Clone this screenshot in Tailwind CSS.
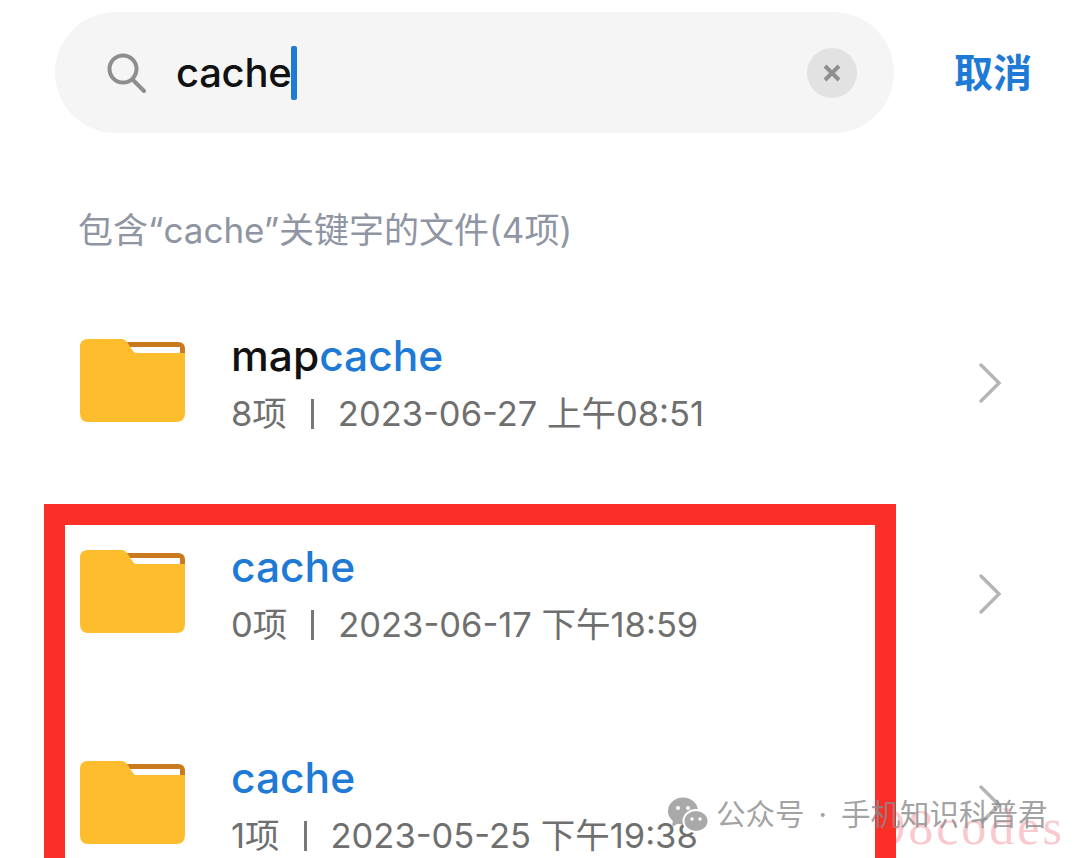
<!DOCTYPE html>
<html lang="zh-CN">
  <head>
    <meta charset="UTF-8" />
    <title>cache</title>
    <script src="https://cdn.jsdelivr.net/npm/@tailwindcss/browser@4"></script>
  </head>
  <body class="bg-white">
    <div class="relative w-[1080px] h-[858px] overflow-hidden bg-white font-['Inter','Noto_Sans_CJK_SC',sans-serif]">
      <!-- search bar -->
      <div class="flex items-center pt-[12px] pl-[55px]">
        <div class="flex items-center w-[839px] h-[121px] rounded-full bg-[#f5f5f6] pl-[52px] pr-[37px]">
          <svg class="w-[40px] h-[40px] shrink-0" viewBox="0 0 40 40" fill="none" stroke="#8e8e8e" stroke-width="4" stroke-linecap="round">
            <circle cx="16" cy="16" r="13.5" />
            <path d="M26 27 L37 38" />
          </svg>
          <div class="flex items-center ml-[29px] text-[40px] font-medium text-[#111] leading-none tracking-[-0.3px]">
            cache<span class="w-[6px] h-[54px] rounded-[2px] bg-[#1f7ad6]"></span>
          </div>
          <div class="ml-auto flex items-center justify-center w-[50px] h-[50px] rounded-full bg-[#e2e2e2]">
            <svg class="w-[20px] h-[20px]" viewBox="0 0 20 20" fill="none" stroke="#8f8f8f" stroke-width="4">
              <path d="M3 3 L17 17 M17 3 L3 17" />
            </svg>
          </div>
        </div>
        <span class="ml-[60px] text-[39px] font-semibold text-[#1f7ad6] leading-none">取消</span>
      </div>

      <p class="mt-[75px] ml-[78px] text-[35px] leading-[44px] text-[#8f95a3]">包含“cache”关键字的文件(4项)</p>

      <!-- rows -->
      <div class="mt-[61px] pl-[80px]">
        <div class="flex items-center h-[211px] -mt-[1px]">
          <svg class="w-[105px] h-[83px] shrink-0 mt-[-74px]" viewBox="0 0 105 83">
            <path d="M46 3 H98 Q105 3 105 10 V24 H46 Z" fill="#c97a1f" />
            <path d="M50 8 H100 V15 H50 Z" fill="#fff" />
            <path d="M8 0 H42 Q45 0 47 3 L53 12 Q54 14 58 14 H105 V74 Q105 83 96 83 H8 Q0 83 0 74 V8 Q0 0 8 0 Z" fill="#fdbd2c" />
          </svg>
          <div class="ml-[46px] mt-[-67px]">
            <div class="text-[42.5px] leading-[46px] font-medium text-[#111]">map<span class="text-[#1f7ad6]">cache</span></div>
            <div class="flex items-center mt-[13px] text-[34.5px] leading-[44px] text-[#6f6f6f]">8项<span class="w-[3px] h-[30px] mx-[24px] bg-[#777]"></span>2023-06-27 上午08:51</div>
          </div>
          <svg class="ml-auto mr-[79px] w-[22px] h-[40px] mt-[-69px]" viewBox="0 0 22 40" fill="none" stroke="#b5b5b5" stroke-width="3.4" stroke-linecap="round">
            <path d="M2 2 L20 20 L2 38" />
          </svg>
        </div>
        <div class="flex items-center h-[211px]">
          <svg class="w-[105px] h-[83px] shrink-0 mt-[-74px]" viewBox="0 0 105 83">
            <path d="M46 3 H98 Q105 3 105 10 V24 H46 Z" fill="#c97a1f" />
            <path d="M50 8 H100 V15 H50 Z" fill="#fff" />
            <path d="M8 0 H42 Q45 0 47 3 L53 12 Q54 14 58 14 H105 V74 Q105 83 96 83 H8 Q0 83 0 74 V8 Q0 0 8 0 Z" fill="#fdbd2c" />
          </svg>
          <div class="ml-[46px] mt-[-67px]">
            <div class="text-[42.5px] leading-[46px] font-medium text-[#1f7ad6]">cache</div>
            <div class="flex items-center mt-[13px] text-[34.5px] leading-[44px] text-[#6f6f6f]">0项<span class="w-[3px] h-[30px] mx-[24px] bg-[#777]"></span>2023-06-17 下午18:59</div>
          </div>
          <svg class="ml-auto mr-[79px] w-[22px] h-[40px] mt-[-69px]" viewBox="0 0 22 40" fill="none" stroke="#b5b5b5" stroke-width="3.4" stroke-linecap="round">
            <path d="M2 2 L20 20 L2 38" />
          </svg>
        </div>
        <div class="flex items-center h-[211px]">
          <svg class="w-[105px] h-[83px] shrink-0 mt-[-74px]" viewBox="0 0 105 83">
            <path d="M46 3 H98 Q105 3 105 10 V24 H46 Z" fill="#c97a1f" />
            <path d="M50 8 H100 V15 H50 Z" fill="#fff" />
            <path d="M8 0 H42 Q45 0 47 3 L53 12 Q54 14 58 14 H105 V74 Q105 83 96 83 H8 Q0 83 0 74 V8 Q0 0 8 0 Z" fill="#fdbd2c" />
          </svg>
          <div class="ml-[46px] mt-[-67px]">
            <div class="text-[42.5px] leading-[46px] font-medium text-[#1f7ad6]">cache</div>
            <div class="flex items-center mt-[13px] text-[34.5px] leading-[44px] text-[#6f6f6f]">1项<span class="w-[3px] h-[30px] mx-[24px] bg-[#777]"></span>2023-05-25 下午19:38</div>
          </div>
          <svg class="ml-auto mr-[79px] w-[22px] h-[40px] mt-[-69px]" viewBox="0 0 22 40" fill="none" stroke="#b5b5b5" stroke-width="3.4" stroke-linecap="round">
            <path d="M2 2 L20 20 L2 38" />
          </svg>
        </div>
      </div>

      <!-- watermarks and red annotation box -->
      <div class="absolute right-[15px] top-[802px] text-[50px] leading-none font-['Liberation_Serif',serif] text-[#f9c9cd] tracking-[3px]">98codes</div>
      <div class="absolute left-[44px] top-[504px] w-[852px] h-[400px] border-[21px] border-[#fb2f28] pointer-events-none"></div>
      <div class="absolute left-[667px] top-[796px] flex items-center">
        <svg class="w-[42px] h-[38px]" viewBox="0 0 42 38">
          <ellipse cx="16" cy="15" rx="15" ry="13.5" fill="#a9a9a9" />
          <path d="M6 24 L5 31 L12 27 Z" fill="#a9a9a9" />
          <ellipse cx="29" cy="25" rx="12.5" ry="11" fill="#a9a9a9" stroke="#fff" stroke-width="2" />
          <circle cx="11" cy="12" r="2" fill="#fff" />
          <circle cx="21" cy="12" r="2" fill="#fff" />
          <circle cx="25" cy="23" r="1.7" fill="#fff" />
          <circle cx="33" cy="23" r="1.7" fill="#fff" />
        </svg>
        <span class="ml-[7px] text-[29.5px] leading-none text-[#8a8a8a]/80 whitespace-nowrap">公众号<span class="mx-[14px]">·</span>手机知识科普君</span>
      </div>
    </div>
  </body>
</html>
